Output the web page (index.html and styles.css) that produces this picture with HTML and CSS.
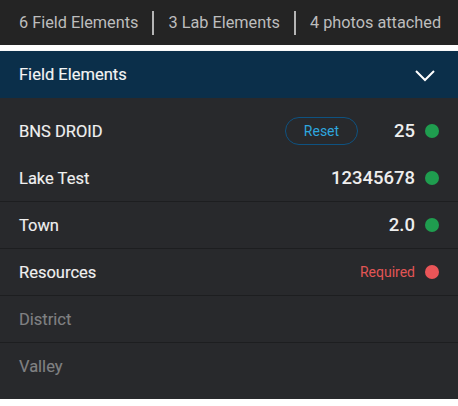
FILE: index.html
```html
<!DOCTYPE html>
<html>
<head>
<meta charset="utf-8">
<link rel="stylesheet" href="styles.css">
</head>
<body>
<div class="summary">
  <span class="sum-item">6 Field Elements</span>
  <span class="sep"></span>
  <span class="sum-item">3 Lab Elements</span>
  <span class="sep"></span>
  <span class="sum-item">4 photos attached</span>
</div>
<div class="panel">
  <div class="panel-head">
    <span class="panel-title">Field Elements</span>
    <svg class="chev" width="20" height="12" viewBox="0 0 20 12"><path d="M1 1 L10 10 L19 1" fill="none" stroke="#ffffff" stroke-width="2"/></svg>
  </div>
  <div class="list">
    <div class="row">
      <span class="label">BNS DROID</span>
      <span class="right">
        <button class="reset">Reset</button>
        <span class="value">25</span>
        <span class="dot ok"></span>
      </span>
    </div>
    <div class="row line">
      <span class="label">Lake Test</span>
      <span class="right">
        <span class="value">12345678</span>
        <span class="dot ok"></span>
      </span>
    </div>
    <div class="row line">
      <span class="label">Town</span>
      <span class="right">
        <span class="value">2.0</span>
        <span class="dot ok"></span>
      </span>
    </div>
    <div class="row line">
      <span class="label">Resources</span>
      <span class="right">
        <span class="required">Required</span>
        <span class="dot bad"></span>
      </span>
    </div>
    <div class="row line">
      <span class="label muted">District</span>
    </div>
    <div class="row">
      <span class="label muted">Valley</span>
    </div>
  </div>
</div>
</body>
</html>
```

FILE: styles.css
```css
* { box-sizing: border-box; }
html, body {
  margin: 0;
  padding: 0;
  background: #ffffff;
  font-family: Roboto, "Liberation Sans", sans-serif;
}
.summary {
  height: 45px;
  background: #242424;
  display: flex;
  align-items: center;
  padding-left: 19px;
  color: #bdbdbd;
  font-size: 16.3px;
}
.sep {
  width: 2px;
  height: 24px;
  background: #b5b5b5;
  margin: 0 14px 0 14px;
}
.panel {
  margin-top: 6px;
  box-shadow: 0 1px 2px rgba(0,0,0,0.35);
}
.panel-head {
  height: 47px;
  background: #0b2f4a;
  display: flex;
  align-items: center;
  justify-content: space-between;
  padding: 0 23px 0 19px;
}
.panel-title {
  color: #f4f4f4;
  font-size: 16.5px;
  font-weight: 400;
  -webkit-text-stroke: 0.15px #f4f4f4;
}
.chev { display: block; margin-top: 3px; }
.list {
  background: #28292c;
  padding: 10px 0 9px;
}
.row {
  height: 47px;
  display: flex;
  align-items: center;
  justify-content: space-between;
  padding: 0 19px;
  border-bottom: 1px solid transparent;
}
.row.line { border-bottom-color: #1d1e20; }
.label {
  color: #f0f0f0;
  font-size: 16.5px;
  font-weight: 400;
  -webkit-text-stroke: 0.15px #f0f0f0;
}
.label.muted { color: #808183; -webkit-text-stroke: 0.15px #808183; }
.right {
  display: flex;
  align-items: center;
}
.reset {
  width: 73px;
  height: 28px;
  border: 1.5px solid #0e5281;
  border-radius: 14px;
  background: transparent;
  color: #2ea6df;
  font-family: Roboto, "Liberation Sans", sans-serif;
  font-size: 14px;
  padding: 0;
  margin-right: 36px;
}
.value {
  color: #eeeeee;
  font-size: 18.5px;
  font-weight: 500;
}
.required {
  color: #e25555;
  font-size: 14px;
}
.dot {
  width: 14px;
  height: 14px;
  border-radius: 50%;
  margin-left: 10px;
}
.dot.ok { background: #1f9d4f; }
.dot.bad { background: #ea5558; }
```
